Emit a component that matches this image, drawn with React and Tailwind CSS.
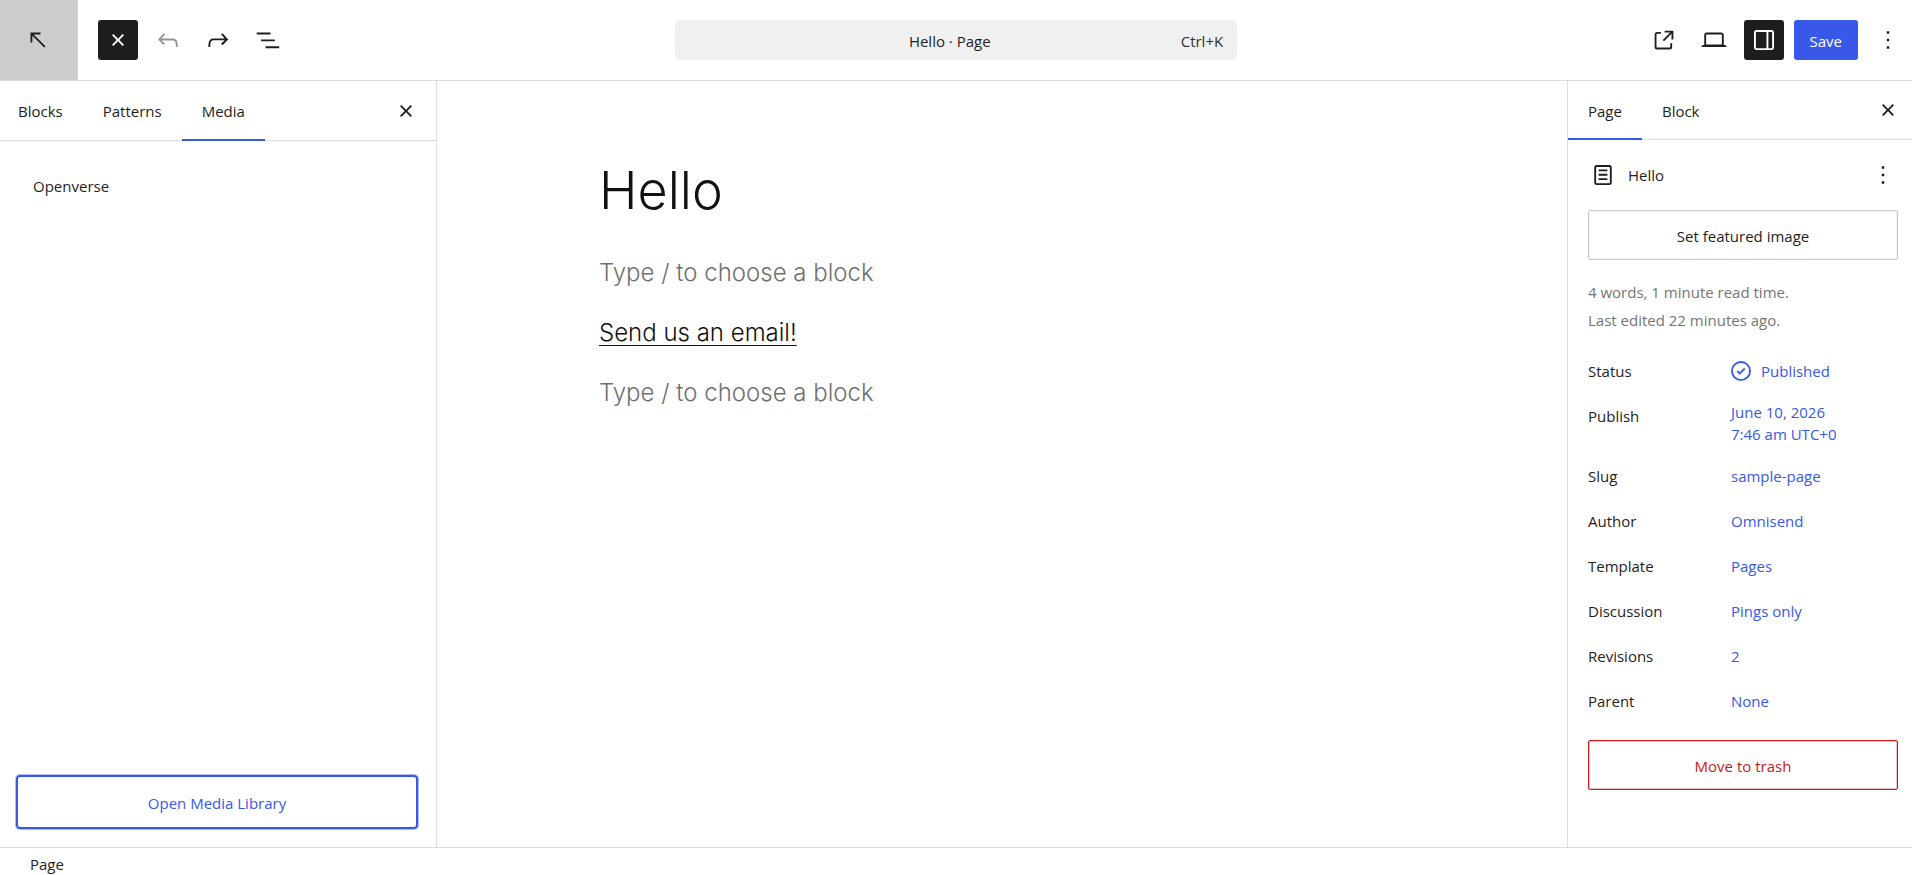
import React, { useState } from 'react';

const icons = {
  arrowUpLeft: 'M14 6H6v8h1.5V8.5L17 18l1-1-9.5-9.5H14V6Z',
  close:
    'M12 13.06l3.712 3.713 1.061-1.06L13.061 12l3.712-3.712-1.06-1.06L12 10.938 8.288 7.227l-1.061 1.06L10.939 12l-3.712 3.712 1.06 1.061L12 13.061z',
  undo: 'M18.3 11.7c-.6-.6-1.4-.9-2.3-.9H6.7l2.9-3.3-1.1-1-4.5 5L8.5 16l1-1-2.7-2.7H16c.5 0 .9.2 1.3.5 1 1 1 3.4 1 4.5v.3h1.5v-.2c0-1.5 0-4.3-1.5-5.7z',
  redo: 'M15.6 6.5l-1.1 1 2.9 3.3H8c-.9 0-1.7.3-2.3.9-1.4 1.5-1.4 4.2-1.4 5.6v.2h1.5v-.3c0-1.1 0-3.5 1-4.5.3-.3.7-.5 1.3-.5h9.2L14.5 15l1.1 1.1 4.6-4.6-4.6-5z',
  listView: 'M3 6h11v1.5H3V6Zm3.5 5.5h11V13h-11v-1.5ZM21 17H10v1.5h11V17Z',
  external:
    'M19.5 4.5h-7V6h4.44l-5.97 5.97 1.06 1.06L18 7.06v4.44h1.5v-7Zm-13 1a2 2 0 0 0-2 2v10a2 2 0 0 0 2 2h10a2 2 0 0 0 2-2v-3H17v3a.5.5 0 0 1-.5.5h-10a.5.5 0 0 1-.5-.5v-10a.5.5 0 0 1 .5-.5h3V5.5h-3Z',
  desktop:
    'M20.5 16h-.7V8c0-1.1-.9-2-2-2H6.2c-1.1 0-2 .9-2 2v8h-.7c-.8 0-1.5.7-1.5 1.5h20c0-.8-.7-1.5-1.5-1.5zM5.7 8c0-.3.2-.5.5-.5h11.6c.3 0 .5.2.5.5v7.6H5.7V8z',
  drawerRight:
    'M18 4H6c-1.1 0-2 .9-2 2v12c0 1.1.9 2 2 2h12c1.1 0 2-.9 2-2V6c0-1.1-.9-2-2-2zm-4 14.5H6c-.3 0-.5-.2-.5-.5V6c0-.3.2-.5.5-.5h8v13zm4.5-.5c0 .3-.2.5-.5.5h-2.5v-13H18c.3 0 .5.2.5.5v12z',
  more: 'M13 19h-2v-2h2v2zm0-6h-2v-2h2v2zm0-6h-2V5h2v2z',
  page: 'M15.5 7.5h-7V9h7V7.5Zm-7 3.5h7v1.5h-7V11Zm7 3.5h-7V16h7v-1.5ZM17 4H7a2 2 0 0 0-2 2v12a2 2 0 0 0 2 2h10a2 2 0 0 0 2-2V6a2 2 0 0 0-2-2ZM7 5.5h10a.5.5 0 0 1 .5.5v12a.5.5 0 0 1-.5.5H7a.5.5 0 0 1-.5-.5V6a.5.5 0 0 1 .5-.5Z',
  published:
    'M12 18.5a6.5 6.5 0 1 1 0-13 6.5 6.5 0 0 1 0 13ZM4 12a8 8 0 1 1 16 0 8 8 0 0 1-16 0Zm11.53-1.47-1.06-1.06L11 12.94l-1.47-1.47-1.06 1.06L11 15.06l4.53-4.53Z',
};

const Icon = ({ name, className = '' }) => (
  <svg viewBox="0 0 24 24" className={`size-[30px] shrink-0 ${className}`} fill="currentColor" fillRule="evenodd" aria-hidden="true">
    <path d={icons[name]} />
  </svg>
);

const IconButton = ({ icon, label, dark, ...props }) => (
  <button
    type="button"
    aria-label={label}
    className={`flex size-10 shrink-0 items-center justify-center rounded-[3px] disabled:text-[#949494] ${dark ? 'bg-[#1e1e1e] text-white' : ''}`}
    {...props}
  >
    <Icon name={icon} />
  </button>
);

const Tab = ({ children, active, className = 'px-5', onClick }) => (
  <button
    type="button"
    role="tab"
    aria-selected={active}
    onClick={onClick}
    className={`-mb-px border-b-2 pt-0.5 ${className} ${active ? 'border-[#3858e9]' : 'border-transparent'}`}
  >
    {children}
  </button>
);

const details = [
  { label: 'Status', value: 'Published', icon: 'published' },
  { label: 'Publish', value: 'June 10, 2026\n7:46 am UTC+0' },
  { label: 'Slug', value: 'sample-page' },
  { label: 'Author', value: 'Omnisend' },
  { label: 'Template', value: 'Pages' },
  { label: 'Discussion', value: 'Pings only' },
  { label: 'Revisions', value: '2' },
  { label: 'Parent', value: 'None' },
];

const Header = () => (
  <header className="grid h-[81px] shrink-0 grid-cols-[6fr_5fr_6fr] items-center border-b border-[#ddd]">
    <div className="flex h-20 items-center">
      <a href="#pages" aria-label="Back to pages" className="flex h-20 w-[78px] items-center justify-center bg-[#ccc] pr-0.5">
        <Icon name="arrowUpLeft" />
      </a>
      <div className="ml-5 flex gap-2.5">
        <IconButton icon="close" label="Block Inserter" dark />
        <IconButton icon="undo" label="Undo" disabled />
        <IconButton icon="redo" label="Redo" />
        <IconButton icon="listView" label="Document Overview" />
      </div>
    </div>
    <button type="button" className="flex h-10 items-center rounded-[5px] bg-[#f0f0f0] pt-0.5 pr-3.5 pl-11">
      <span className="flex-1 text-center">Hello · Page</span>
      <span className="text-[#2f2f2f]">Ctrl+K</span>
    </button>
    <div className="flex items-center justify-end gap-2.5 pr-1">
      <IconButton icon="external" label="View Page" />
      <IconButton icon="desktop" label="View" />
      <IconButton icon="drawerRight" label="Settings" dark />
      <button type="button" className="h-10 rounded-[3px] bg-[#3858e9] px-4 pt-0.5 text-white">
        Save
      </button>
      <IconButton icon="more" label="Options" />
    </div>
  </header>
);

const InserterPanel = () => {
  const [tab, setTab] = useState('Media');

  return (
    <aside className="flex w-[437px] shrink-0 flex-col border-r border-[#ddd]">
      <div className="flex h-[60px] border-b border-[#ddd]" role="tablist">
        <Tab className="pr-5 pl-[18px]" active={tab === 'Blocks'} onClick={() => setTab('Blocks')}>Blocks</Tab>
        <Tab active={tab === 'Patterns'} onClick={() => setTab('Patterns')}>Patterns</Tab>
        <Tab active={tab === 'Media'} onClick={() => setTab('Media')}>Media</Tab>
        <div className="mr-2.5 ml-auto flex items-center">
          <IconButton icon="close" label="Close Block Inserter" />
        </div>
      </div>
      <div className="flex flex-1 flex-col px-4 pt-[25px] pb-[18px]">
        <button type="button" className="h-10 px-[17px] text-left">Openverse</button>
        <button
          type="button"
          className="mt-auto mr-0.5 h-[54px] rounded-[4px] border-2 border-[#3858e9] pt-0.5 text-[#3858e9] ring-1 ring-[#3858e9]/40"
        >
          Open Media Library
        </button>
      </div>
    </aside>
  );
};

const Canvas = () => (
  <main className="flex-1 px-8 font-['Inter',sans-serif] text-[24px] leading-9 font-light text-[#111]">
    <div className="mx-auto flex max-w-[806px] flex-col gap-6 pt-[76px]">
      <h1 className="mb-1.5 text-[52px] leading-[68px] font-light">Hello</h1>
      <p className="text-[#707070]">Type / to choose a block</p>
      <p>
        <a href="#email" className="underline decoration-1 underline-offset-4">Send us an email!</a>
      </p>
      <p className="text-[#707070]">Type / to choose a block</p>
    </div>
  </main>
);

const SettingsPanel = () => {
  const [tab, setTab] = useState('Page');

  return (
    <aside className="w-[345px] shrink-0 border-l border-[#ddd]">
      <div className="flex h-[59px] border-b border-[#ddd]" role="tablist">
        <Tab active={tab === 'Page'} onClick={() => setTab('Page')}>Page</Tab>
        <Tab active={tab === 'Block'} onClick={() => setTab('Block')}>Block</Tab>
        <div className="mr-1 ml-auto flex items-center">
          <IconButton icon="close" label="Close Settings" />
        </div>
      </div>
      <div className="pt-[15px] pr-3.5 pl-5">
        <div className="flex h-10 items-center">
          <Icon name="page" />
          <h2 className="ml-2.5 flex-1">Hello</h2>
          <div className="-mr-[5px]">
            <IconButton icon="more" label="Actions" />
          </div>
        </div>
        <button
          type="button"
          className="mt-[15px] h-[50px] w-full rounded-[2px] border border-[#ccc] pt-0.5 inset-ring inset-ring-[#ccc]/25"
        >
          Set featured image
        </button>
        <p className="mt-[18px] leading-7 text-[#757575]">
          4 words, 1 minute read time.
          <br />
          Last edited 22 minutes ago.
        </p>
        <dl className="mt-[17px] flex flex-col gap-[5px]">
          {details.map(({ label, value, icon }) => (
            <div key={label} className="flex items-start">
              <dt className="w-[143px] leading-10">{label}</dt>
              <dd>
                <button
                  type="button"
                  className="flex min-h-10 items-center gap-[5px] pt-[5px] pb-1.5 text-left leading-[22px] whitespace-pre-line text-[#3858e9]"
                >
                  {icon && <Icon name={icon} className="-my-1 -ml-[5px]" />}
                  {value}
                </button>
              </dd>
            </div>
          ))}
        </dl>
        <button
          type="button"
          className="mt-[19px] h-[50px] w-full rounded-[2px] border border-[#cc1818] pt-0.5 text-[#cc1818] inset-ring inset-ring-[#cc1818]/25"
        >
          Move to trash
        </button>
      </div>
    </aside>
  );
};

export default function App() {
  return (
    <div className="flex min-h-screen flex-col bg-white font-['Open_Sans','Noto_Sans',sans-serif] text-[15px] leading-5 text-[#1e1e1e]">
      <Header />
      <div className="flex flex-1">
        <InserterPanel />
        <Canvas />
        <SettingsPanel />
      </div>
      <footer className="flex h-7 shrink-0 items-center border-t border-[#ddd] px-[30px] pt-1">
        <span className="leading-5">Page</span>
      </footer>
    </div>
  );
}
